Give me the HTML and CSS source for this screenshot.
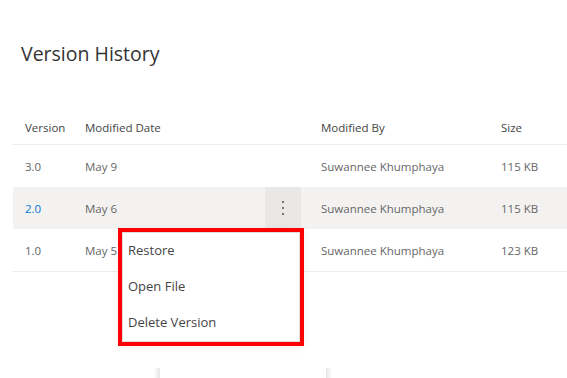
FILE: index.html
```html
<!DOCTYPE html>
<html>
<head>
<meta charset="utf-8">
<link rel="stylesheet" href="styles.css">
</head>
<body>
<div class="page">
  <h1 class="title">Version History</h1>
  <div class="table">
    <div class="row head">
      <div class="c-ver">Version</div>
      <div class="c-date">Modified Date</div>
      <div class="c-act"></div>
      <div class="c-by">Modified By</div>
      <div class="c-size">Size</div>
    </div>
    <div class="row">
      <div class="c-ver">3.0</div>
      <div class="c-date">May 9</div>
      <div class="c-act"></div>
      <div class="c-by">Suwannee Khumphaya</div>
      <div class="c-size">115 KB</div>
    </div>
    <div class="row selected">
      <div class="c-ver link">2.0</div>
      <div class="c-date">May 6</div>
      <div class="c-act">
        <div class="kebab"><span></span><span></span><span></span></div>
        <div class="menu">
          <div class="item">Restore</div>
          <div class="item">Open File</div>
          <div class="item">Delete Version</div>
        </div>
      </div>
      <div class="c-by">Suwannee Khumphaya</div>
      <div class="c-size">115 KB</div>
    </div>
    <div class="row bordered">
      <div class="c-ver">1.0</div>
      <div class="c-date">May 5</div>
      <div class="c-act"></div>
      <div class="c-by">Suwannee Khumphaya</div>
      <div class="c-size">123 KB</div>
    </div>
  </div>
  <div class="footer">
    <div class="shade s1"></div>
    <div class="shade s2"></div>
  </div>
</div>
</body>
</html>
```
FILE: styles.css
```css
html, body {
  margin: 0;
  padding: 0;
  background: #fff;
}
body {
  font-family: "Open Sans", "Noto Sans", sans-serif;
  color: #666;
  width: 567px;
  height: 378px;
  overflow: hidden;
}
.page {
  padding-top: 40px;
}
.title {
  margin: 0 0 0 21px;
  font-size: 19.5px;
  font-weight: 400;
  color: #333;
  line-height: 28px;
}
.table {
  margin-top: 44px;
  margin-left: 13px;
}
.row {
  display: grid;
  grid-template-columns: 72px 180px 36px 200px 66px;
  align-items: center;
  height: 42px;
  font-size: 11.5px;
  color: #666;
}
.row > div {
  white-space: nowrap;
}
.row.head {
  height: 32px;
  color: #444;
  border-bottom: 1px solid #ececec;
  align-items: start;
}
.row.head > div {
  line-height: 16px;
  margin-top: 8px;
}
.c-ver { padding-left: 12px; }
.c-by { padding-left: 20px; }
.c-size { padding-left: 0; }
.c-act { height: 100%; position: relative; }
.row.selected { background: #f3f2f1; }
.row.bordered { border-bottom: 1px solid #ececec; height: 42px; }
.link { color: #0078d4; }
.kebab {
  height: 100%;
  background: #e9e8e7;
  display: flex;
  flex-direction: column;
  align-items: center;
  justify-content: center;
  gap: 4px;
}
.kebab span {
  width: 2px;
  height: 2px;
  background: #777;
}
.menu {
  position: absolute;
  top: 41px;
  left: -147px;
  width: 178px;
  padding-top: 2px;
  background: #fff;
  border: 4px solid #ff0000;
  box-shadow: inset 0 0 0 1px #ddd, 0 2px 8px rgba(0,0,0,0.06);
  z-index: 2;
}
.item {
  height: 36px;
  line-height: 32px;
  padding-left: 6px;
  font-size: 13px;
  color: #444;
  white-space: nowrap;
}
.footer {
  position: relative;
  height: 20px;
  margin-top: 96px;
}
.shade {
  position: absolute;
  top: 0;
  width: 6px;
  height: 10px;
}
.s1 { left: 154px; background: linear-gradient(to right, #fff, #e6e6e6); }
.s2 { left: 326px; background: linear-gradient(to left, #fff, #e6e6e6); }
```
